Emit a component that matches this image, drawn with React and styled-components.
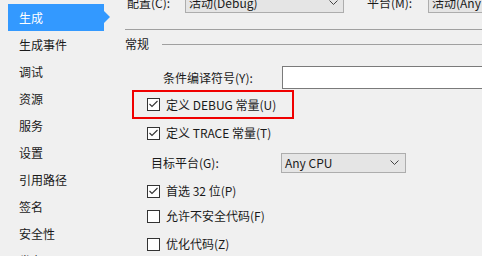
import React from "react";
import styled, { createGlobalStyle } from "styled-components";

const Global = createGlobalStyle`
  html, body {
    margin: 0;
    padding: 0;
    background: #f0f0f0;
  }
  body {
    font-family: "Noto Sans CJK SC", "Noto Sans", sans-serif;
    font-size: 12px;
    color: #1a1a1a;
  }
`;

const navItems = ["生成", "生成事件", "调试", "资源", "服务", "设置", "引用路径", "签名", "安全性", "发布"];

const Chevron = () => (
  <svg width="9" height="6" viewBox="0 0 9 6">
    <polyline points="0.5,0.5 4.5,4.5 8.5,0.5" fill="none" stroke="#444" strokeWidth="1" />
  </svg>
);

const Check = ({ checked }) => (
  <Box>
    {checked && (
      <svg width="11" height="11" viewBox="0 0 11 11">
        <polyline points="1.5,5 4,7.5 9.5,2" fill="none" stroke="#333" strokeWidth="1.1" />
      </svg>
    )}
  </Box>
);

const CheckRow = ({ checked, label, top }) => (
  <Row $top={top}>
    <Check checked={checked} />
    <CheckLabel>{label}</CheckLabel>
  </Row>
);

export default function App() {
  return (
    <Page>
      <Global />
      <Sidebar>
        {navItems.map((name, i) => (
          <NavItem key={name} $active={i === 0}>
            {name}
          </NavItem>
        ))}
      </Sidebar>
      <Main>
        <TopRow>
          <TopLabel $width={58}>配置(C):</TopLabel>
          <Combo $width={159}>
            <span>活动(Debug)</span>
            <Chevron />
          </Combo>
          <TopLabel $width={61} style={{ marginLeft: 23 }}>平台(M):</TopLabel>
          <Combo $width={150}>
            <span>活动(Any CPU)</span>
            <Chevron />
          </Combo>
        </TopRow>
        <Divider />
        <SectionHeader>
          <span>常规</span>
          <HeaderLine />
        </SectionHeader>
        <FieldRow>
          <FieldLabel>条件编译符号(Y):</FieldLabel>
          <TextBox />
        </FieldRow>
        <Highlight>
          <Check checked />
          <CheckLabel>定义 DEBUG 常量(U)</CheckLabel>
        </Highlight>
        <CheckRow checked top={4} label="定义 TRACE 常量(T)" />
        <PlatformRow>
          <PlatformLabel>目标平台(G):</PlatformLabel>
          <SmallCombo>
            <span>Any CPU</span>
            <Chevron />
          </SmallCombo>
        </PlatformRow>
        <CheckRow checked top={8} label="首选 32 位(P)" />
        <CheckRow top={5} label="允许不安全代码(F)" />
        <CheckRow top={8} label="优化代码(Z)" />
      </Main>
    </Page>
  );
}

const Page = styled.div`
  display: flex;
  width: 482px;
  height: 256px;
  overflow: hidden;
  background: #f0f0f0;
`;

const Sidebar = styled.div`
  flex: none;
  width: 125px;
  box-sizing: border-box;
  padding: 4px 0 0 8px;
`;

const NavItem = styled.div`
  position: relative;
  width: 96px;
  height: 27px;
  box-sizing: border-box;
  padding-left: 11px;
  display: flex;
  align-items: center;
  line-height: 16px;
  background: ${(p) => (p.$active ? "#3399ff" : "transparent")};
  color: ${(p) => (p.$active ? "#ffffff" : "#1a1a1a")};

  &::after {
    content: "";
    display: ${(p) => (p.$active ? "block" : "none")};
    position: absolute;
    right: -6px;
    top: 7px;
    border-left: 6px solid #3399ff;
    border-top: 6px solid transparent;
    border-bottom: 6px solid transparent;
  }
`;

const Main = styled.div`
  flex: 1;
  min-width: 0;
  display: flex;
  flex-direction: column;
  margin-top: -8px;
  overflow: hidden;
`;

const TopRow = styled.div`
  display: flex;
  align-items: center;
  height: 21px;
  padding-left: 2px;
`;

const TopLabel = styled.span`
  flex: none;
  width: ${(p) => p.$width}px;
  line-height: 16px;
`;

const Combo = styled.div`
  flex: none;
  width: ${(p) => p.$width}px;
  height: 21px;
  box-sizing: border-box;
  border: 1px solid #adadad;
  background: #e5e5e5;
  display: flex;
  align-items: center;
  justify-content: space-between;
  padding: 0 5px 0 3px;
  line-height: 16px;
`;

const Divider = styled.div`
  margin-top: 16px;
  height: 1px;
  background: #a0a0a0;
`;

const SectionHeader = styled.div`
  margin-top: 6px;
  height: 16px;
  display: flex;
  align-items: center;
  line-height: 16px;
`;

const HeaderLine = styled.div`
  flex: 1;
  height: 1px;
  margin-left: 13px;
  background: #a0a0a0;
`;

const FieldRow = styled.div`
  margin-top: 14px;
  display: flex;
  align-items: center;
  padding-left: 38px;
`;

const FieldLabel = styled.span`
  flex: none;
  width: 119px;
  line-height: 16px;
`;

const TextBox = styled.div`
  flex: none;
  width: 220px;
  height: 23px;
  box-sizing: border-box;
  border: 1px solid #7a7a7a;
  background: #ffffff;
`;

const Highlight = styled.div`
  margin: 1px 0 0 7px;
  width: 162px;
  height: 29px;
  box-sizing: border-box;
  border: 2px solid #f00000;
  display: flex;
  align-items: center;
  padding-left: 13px;
`;

const Row = styled.div`
  margin-top: ${(p) => p.$top}px;
  height: 20px;
  display: flex;
  align-items: center;
  padding-left: 22px;
`;

const Box = styled.div`
  flex: none;
  width: 13px;
  height: 13px;
  box-sizing: border-box;
  border: 1px solid #333333;
  background: #ffffff;
  display: flex;
  align-items: center;
  justify-content: center;
`;

const CheckLabel = styled.span`
  margin-left: 6px;
  line-height: 16px;
  white-space: nowrap;
`;

const PlatformRow = styled.div`
  margin-top: 10px;
  height: 20px;
  display: flex;
  align-items: center;
  padding-left: 26px;
`;

const PlatformLabel = styled.span`
  flex: none;
  width: 130px;
  line-height: 16px;
`;

const SmallCombo = styled.div`
  flex: none;
  width: 125px;
  height: 20px;
  box-sizing: border-box;
  border: 1px solid #adadad;
  background: #e5e5e5;
  display: flex;
  align-items: center;
  justify-content: space-between;
  padding: 0 6px 0 3px;
  line-height: 16px;
`;
